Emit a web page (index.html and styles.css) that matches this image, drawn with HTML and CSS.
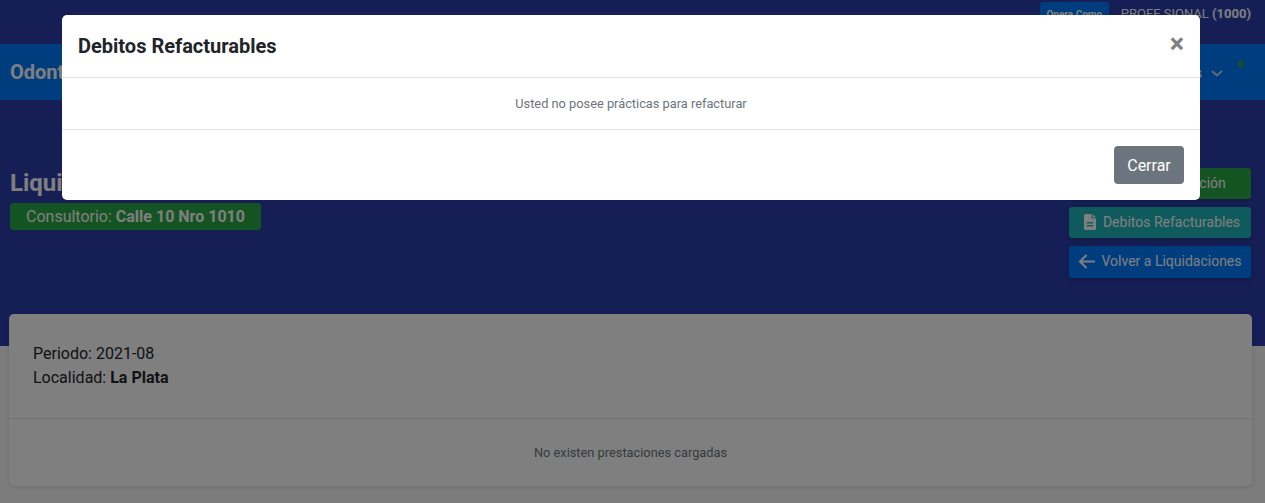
FILE: index.html
```html
<!DOCTYPE html>
<html lang="es">
<head>
<meta charset="utf-8">
<title>Debitos Refacturables</title>
<link rel="stylesheet" href="styles.css">
</head>
<body>
<div class="hero">
  <div class="topbar">
    <a class="btn-small">Opera Como</a>
    <span class="user">PROFE SIONAL <b>(1000)</b></span>
  </div>
  <nav class="nav">
    <span class="brand">Odontología</span>
    <span class="nav-user">Usuarios
      <svg class="chev" width="12" height="7" viewBox="0 0 12 7"><path d="M1 1l5 4.5L11 1" fill="none" stroke="#fff" stroke-width="2"/></svg>
    </span>
    <span class="dot"></span>
  </nav>
  <div class="head">
    <div class="head-left">
      <h1 class="title">Liquidación</h1>
      <span class="badge">Consultorio: <b>Calle 10 Nro 1010</b></span>
    </div>
    <div class="actions">
      <a class="btn btn-green">Cerrar Liquidación</a>
      <a class="btn btn-teal">
        <svg class="doc" width="12" height="16" viewBox="0 0 12 16"><path fill="#fff" fill-rule="evenodd" d="M1.5 0H7.5v4.5H12v10A1.5 1.5 0 0 1 10.500 16h-9A1.500 1.500 0 0 1 0 14.500v-13A1.500 1.500 0 0 1 1.500 0zM8.500 0L12 3.500H8.500zM2.800 8v1.500h6.400V8zm0 3v1.500h6.400V11z"/></svg>
        Debitos Refacturables</a>
      <a class="btn btn-blue">
        <svg class="arrow" width="17" height="15" viewBox="0 0 17 15"><path d="M17 7.500H2M8.500 1L2 7.500 8.500 14" fill="none" stroke="#fff" stroke-width="2"/></svg>
        Volver a Liquidaciones</a>
    </div>
  </div>
</div>
<main class="content">
  <section class="card">
    <div class="card-top">
      <p>Periodo: 2021-08</p>
      <p>Localidad: <b>La Plata</b></p>
    </div>
    <div class="card-empty">No existen prestaciones cargadas</div>
  </section>
</main>
<div class="backdrop"></div>
<div class="modal-wrap">
  <div class="modal">
    <header class="modal-head">
      <h5 class="modal-title">Debitos Refacturables</h5>
      <span class="close">×</span>
    </header>
    <div class="modal-body">Usted no posee prácticas para refacturar</div>
    <footer class="modal-foot"><a class="btn-close">Cerrar</a></footer>
  </div>
</div>
</body>
</html>
```
FILE: styles.css
```css
* { box-sizing: border-box; }
html, body { height: 100%; }
body {
  margin: 0;
  height: 503px;
  overflow: hidden;
  background: #f8f9fa;
  font-family: Roboto, sans-serif;
  font-size: 16px;
  color: #212529;
}
.hero { background: #2a3eab; height: 346px; }
.topbar {
  height: 44px;
  display: flex;
  justify-content: flex-end;
  align-items: flex-start;
  gap: 12px;
  padding: 2px 14px 0 0;
}
.btn-small {
  width: 69px;
  height: 25px;
  background: #007bff;
  border-radius: 3px;
  color: #fff;
  font-size: 10px;
  font-weight: 700;
  text-align: center;
  line-height: 26px;
}
.user { color: #fff; font-size: 13px; line-height: 24px; }
.nav {
  height: 56px;
  background: #007bff;
  display: flex;
  align-items: center;
  padding: 0 42px 0 10px;
  color: #fff;
}
.brand { font-size: 20px; font-weight: 700; }
.nav-user { margin-left: auto; font-size: 14px; display: flex; align-items: center; gap: 9px; padding-top: 2px; }
.chev { opacity: .7; }
.dot {
  position: absolute;
  left: 1238px;
  top: 61px;
  width: 6px;
  height: 6px;
  border-radius: 50%;
  background: #28a745;
}
.head {
  display: flex;
  justify-content: space-between;
  align-items: flex-start;
  padding: 68px 14px 0 10px;
}
.head-left { display: flex; flex-direction: column; align-items: flex-start; }
.title { margin: 0 0 4px; font-size: 24px; line-height: 31px; font-weight: 700; color: #fff; }
.badge {
  height: 27px;
  padding: 0 16px;
  background: #28a745;
  border-radius: 3px;
  color: #fff;
  font-size: 16px;
  line-height: 27px;
}
.actions { display: flex; flex-direction: column; align-items: flex-end; gap: 8px; }
.btn {
  width: 182px;
  height: 31px;
  display: flex;
  align-items: center;
  justify-content: center;
  gap: 7px;
  padding-bottom: 2px;
  border-radius: 3px;
  color: #fff;
  font-size: 14px;
  box-shadow: 0 2px 5px rgba(0,0,0,.2);
}
.btn-green { background: #28a745; padding-left: 18px; }
.btn-teal { background: #1cb4b8; padding-left: 4px; }
.btn-blue { background: #007bff; height: 32px; gap: 6px; }
.content { padding: 0 13px 0 9px; margin-top: -32px; position: relative; }
.card {
  background: #fff;
  height: 172px;
  border-radius: 5px;
  box-shadow: 0 1px 4px rgba(0,0,0,.15);
  display: flex;
  flex-direction: column;
}
.card-top { height: 105px; padding: 28px 24px 0; border-bottom: 1px solid #dee2e6; }
.card-top p { margin: 0; line-height: 24px; font-size: 16px; }
.card-empty {
  flex: 1;
  display: flex;
  align-items: center;
  justify-content: center;
  color: #6c757d;
  font-size: 12.8px;
}
.backdrop { position: fixed; inset: 0; background: rgba(0,0,0,.5); }
.modal-wrap { position: fixed; top: 15px; left: 62px; width: 1138px; }
.modal { background: #fff; border-radius: 5px; display: flex; flex-direction: column; height: 185px; }
.modal-head {
  height: 63px;
  border-bottom: 1px solid #dee2e6;
  display: flex;
  align-items: center;
  justify-content: space-between;
  padding: 0 16px;
}
.modal-title { margin: 0; font-size: 20px; font-weight: 700; color: #212529; }
.close { font-size: 27px; font-weight: 700; color: #808080; line-height: 1; padding-bottom: 4px; }
.modal-body {
  height: 52px;
  border-bottom: 1px solid #dee2e6;
  display: flex;
  align-items: center;
  justify-content: center;
  color: #6c757d;
  font-size: 12.8px;
}
.modal-foot { flex: 1; display: flex; align-items: center; justify-content: flex-end; padding: 0 16px; }
.btn-close {
  width: 70px;
  height: 38px;
  padding-top: 1px;
  background: #6c757d;
  border-radius: 4px;
  color: #fff;
  text-align: center;
  line-height: 38px;
  font-size: 16px;
}
```
